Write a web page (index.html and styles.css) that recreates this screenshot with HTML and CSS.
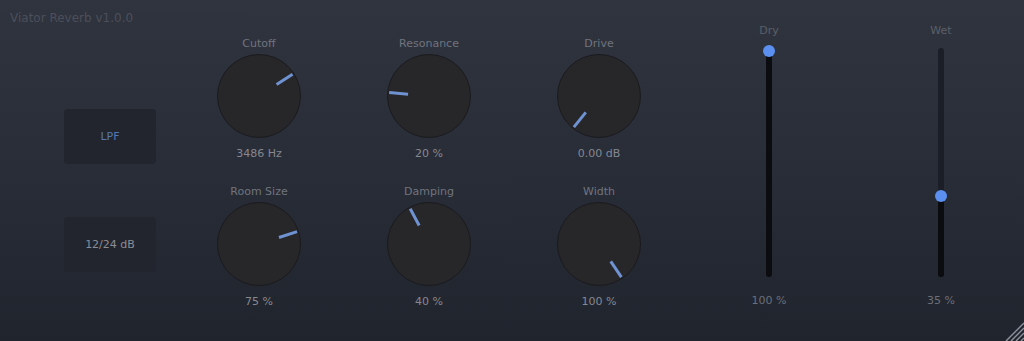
FILE: index.html
```html
<!DOCTYPE html>
<html>
<head>
<meta charset="utf-8">
<link rel="stylesheet" href="styles.css">
</head>
<body>
<div class="plugin">
  <div class="left">
    <div class="title">Viator Reverb v1.0.0</div>
    <div class="btn btn-active">LPF</div>
    <div class="btn">12/24 dB</div>
  </div>
  <div class="knobs">
    <div class="knob-cell">
      <div class="label">Cutoff</div>
      <svg class="knob" viewBox="-42 -42 84 84"><circle r="41.5" class="knob-body"/><line x1="0" y1="-21" x2="0" y2="-40" class="pointer" transform="rotate(57)"/></svg>
      <div class="value">3486 Hz</div>
    </div>
    <div class="knob-cell">
      <div class="label">Resonance</div>
      <svg class="knob" viewBox="-42 -42 84 84"><circle r="41.5" class="knob-body"/><line x1="0" y1="-21" x2="0" y2="-40" class="pointer" transform="rotate(-85)"/></svg>
      <div class="value">20 %</div>
    </div>
    <div class="knob-cell">
      <div class="label">Drive</div>
      <svg class="knob" viewBox="-42 -42 84 84"><circle r="41.5" class="knob-body"/><line x1="0" y1="-21" x2="0" y2="-40" class="pointer" transform="rotate(-141)"/></svg>
      <div class="value">0.00 dB</div>
    </div>
    <div class="knob-cell">
      <div class="label">Room Size</div>
      <svg class="knob" viewBox="-42 -42 84 84"><circle r="41.5" class="knob-body"/><line x1="0" y1="-21" x2="0" y2="-40" class="pointer" transform="rotate(72)"/></svg>
      <div class="value">75 %</div>
    </div>
    <div class="knob-cell">
      <div class="label">Damping</div>
      <svg class="knob" viewBox="-42 -42 84 84"><circle r="41.5" class="knob-body"/><line x1="0" y1="-21" x2="0" y2="-40" class="pointer" transform="rotate(-28)"/></svg>
      <div class="value">40 %</div>
    </div>
    <div class="knob-cell">
      <div class="label">Width</div>
      <svg class="knob" viewBox="-42 -42 84 84"><circle r="41.5" class="knob-body"/><line x1="0" y1="-21" x2="0" y2="-40" class="pointer" transform="rotate(146)"/></svg>
      <div class="value">100 %</div>
    </div>
  </div>
  <div class="sliders">
    <div class="slider-col">
      <div class="slabel">Dry</div>
      <div class="track">
        <div class="fill" style="height: 100%"></div>
        <div class="thumb" style="bottom: 220px"></div>
      </div>
      <div class="svalue">100 %</div>
    </div>
    <div class="slider-col">
      <div class="slabel">Wet</div>
      <div class="track">
        <div class="fill" style="height: 36%"></div>
        <div class="thumb" style="bottom: 75px"></div>
      </div>
      <div class="svalue">35 %</div>
    </div>
  </div>
  <svg class="resize" width="20" height="20" viewBox="0 0 20 20">
    <line x1="20" y1="2" x2="2" y2="20"/>
    <line x1="20" y1="7" x2="7" y2="20"/>
    <line x1="20" y1="12" x2="12" y2="20"/>
    <line x1="20" y1="17" x2="17" y2="20"/>
  </svg>
</div>
</body>
</html>
```

FILE: styles.css
```css
html, body {
  margin: 0;
  padding: 0;
}
body {
  width: 1024px;
  height: 341px;
  overflow: hidden;
  font-family: "DejaVu Sans", Verdana, sans-serif;
}
.plugin {
  position: relative;
  width: 1024px;
  height: 341px;
  display: flex;
  background: linear-gradient(180deg, #30343f 0%, #282c36 55%, #20242d 100%);
}
.left {
  width: 174px;
  flex: none;
  display: flex;
  flex-direction: column;
}
.title {
  margin: 10px 0 0 10px;
  height: 16px;
  line-height: 16px;
  font-size: 12px;
  color: #4b4f5a;
  white-space: nowrap;
}
.btn {
  margin-left: 64px;
  width: 92px;
  height: 55px;
  border-radius: 4px;
  background: #22252e;
  display: flex;
  align-items: center;
  justify-content: center;
  font-size: 11px;
  color: #8a8d95;
}
.btn-active {
  margin-top: 83px;
  margin-bottom: 53px;
  color: #5477b6;
}
.knobs {
  width: 510px;
  flex: none;
  display: grid;
  grid-template-columns: repeat(3, 170px);
  grid-auto-rows: 127px;
  row-gap: 21px;
  padding-top: 36px;
}
.knob-cell {
  display: flex;
  flex-direction: column;
  align-items: center;
}
.label, .value {
  height: 16px;
  line-height: 16px;
  font-size: 11px;
  color: #70747e;
  white-space: nowrap;
}
.value {
  color: #858891;
  margin-top: 8px;
}
.knob {
  width: 84px;
  height: 84px;
  margin-top: 2px;
  display: block;
}
.knob-body {
  fill: #272628;
  stroke: #1a1b1f;
  stroke-width: 1;
}
.pointer {
  stroke: #6f92d2;
  stroke-width: 3;
  stroke-linecap: butt;
}
.sliders {
  flex: none;
  display: flex;
  padding-left: 25px;
  column-gap: 52px;
}
.slider-col {
  width: 120px;
  display: flex;
  flex-direction: column;
  align-items: center;
  padding-top: 23px;
}
.slabel, .svalue {
  height: 16px;
  line-height: 16px;
  font-size: 11px;
  color: #5b5f69;
}
.svalue {
  color: #6b6f79;
  margin-top: 16px;
}
.track {
  position: relative;
  margin-top: 9px;
  width: 6px;
  height: 229px;
  border-radius: 3px;
  background: #1b1e26;
}
.fill {
  position: absolute;
  left: 0;
  bottom: 0;
  width: 6px;
  border-radius: 3px;
  background: #0b0c0f;
}
.thumb {
  position: absolute;
  left: -3px;
  width: 12px;
  height: 12px;
  border-radius: 50%;
  background: #5b8ff0;
}
.resize {
  position: absolute;
  right: 0;
  bottom: 0;
}
.resize line {
  stroke: #8c9099;
  stroke-width: 1.5;
}
```
